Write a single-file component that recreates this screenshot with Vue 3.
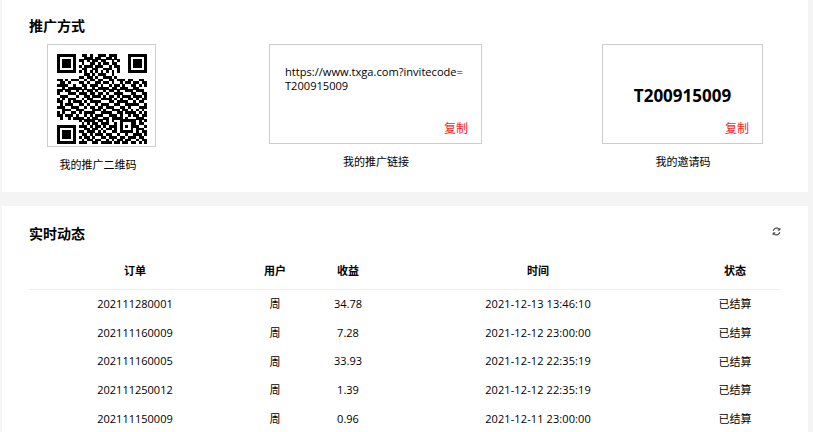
<script setup>
const raw = [
  '000000000110100111011100000000000',
  '000000000011101100110100000000000',
  '000000001101011011001010000000000',
  '000000000100110101101100000000000',
  '000000001011101110010110000000000',
  '000000000110011001110010000000000',
  '000000001010101010101010000000000',
  '000000000011010111001000000000000',
  '000000001101101001110100000000000',
  '110101110010110110011011101100110',
  '011010001101001101101001011011011',
  '111100100110111010010110100110101',
  '001011111010010111101101110011000',
  '110110010101101001011010011101110',
  '100011101110110110100111000110011',
  '011100010011011101011010111011101',
  '101011100101100011110101001101011',
  '110010111010111100011011110010110',
  '010111001101001011100110011111001',
  '111001110010110110111001101000111',
  '001110011100011101001110110101010',
  '101001101011110011110011011110101',
  '110111010010101110011101001011011',
  '010010111101011001101111010001110',
  '000000001011110110101001111110101',
  '000000000101011011100101000110110',
  '000000001110101101011101010111001',
  '000000000011011010110101000101110',
  '000000001101110101001101111101011',
  '000000000110101110110010010011101',
  '000000001011010011011101101110110',
  '000000000101101100101011011001011',
  '000000001110011011110110110110101'
]
const N = 33
function inFinder(x, y, ox, oy) {
  const dx = x - ox, dy = y - oy
  if (dx < 0 || dy < 0 || dx > 6 || dy > 6) return false
  return dx === 0 || dy === 0 || dx === 6 || dy === 6 || (dx >= 2 && dx <= 4 && dy >= 2 && dy <= 4)
}
const cells = []
for (let y = 0; y < N; y++) {
  for (let x = 0; x < N; x++) {
    const f = inFinder(x, y, 0, 0) || inFinder(x, y, 26, 0) || inFinder(x, y, 0, 26)
    if (f || raw[y][x] === '1') cells.push({ x, y })
  }
}
const rows = [
  { id: '202111280001', user: '周', income: '34.78', time: '2021-12-13 13:46:10' },
  { id: '202111160009', user: '周', income: '7.28', time: '2021-12-12 23:00:00' },
  { id: '202111160005', user: '周', income: '33.93', time: '2021-12-12 22:35:19' },
  { id: '202111250012', user: '周', income: '1.39', time: '2021-12-12 22:35:19' },
  { id: '202111150009', user: '周', income: '0.96', time: '2021-12-11 23:00:00' }
]
</script>

<template>
  <div class="page">
    <section class="card promo">
      <h2 class="title">推广方式</h2>
      <div class="ways">
        <div class="way way-qr">
          <div class="box box-qr">
            <svg class="qr" viewBox="0 0 33 33" shape-rendering="crispEdges" aria-label="二维码">
              <rect v-for="c in cells" :key="c.x + '-' + c.y" :x="c.x" :y="c.y" width="1.02" height="1.02" fill="#000" />
            </svg>
          </div>
          <p class="caption caption-qr">我的推广二维码</p>
        </div>
        <div class="way way-link">
          <div class="box box-link">
            <p class="url">https://www.txga.com?invitecode=<br />T200915009</p>
            <span class="copy">复制</span>
          </div>
          <p class="caption">我的推广链接</p>
        </div>
        <div class="way way-code">
          <div class="box box-code">
            <strong class="code">T200915009</strong>
            <span class="copy">复制</span>
          </div>
          <p class="caption">我的邀请码</p>
        </div>
      </div>
    </section>

    <section class="card live">
      <div class="live-head">
        <h2 class="title">实时动态</h2>
        <svg class="refresh" viewBox="0 0 10 10" fill="none" stroke="#111" stroke-width="1.1">
          <path d="M1.4 4.2A3.7 3.7 0 0 1 8 2.6" />
          <path d="M8.6 5.8A3.7 3.7 0 0 1 2 7.4" />
          <path d="M8.7 1v2.4H6.3" stroke-width="1" />
          <path d="M1.3 9V6.6h2.4" stroke-width="1" />
        </svg>
      </div>
      <div class="table">
        <div class="tr th">
          <span>订单</span><span>用户</span><span>收益</span><span>时间</span><span>状态</span>
        </div>
        <div v-for="r in rows" :key="r.id" class="tr td">
          <span class="num">{{ r.id }}</span>
          <span>{{ r.user }}</span>
          <span class="num">{{ r.income }}</span>
          <span class="num time">{{ r.time }}</span>
          <span>已结算</span>
        </div>
      </div>
    </section>
  </div>
</template>

<style scoped>
.page {
  width: 813px;
  height: 432px;
  overflow: hidden;
  box-sizing: border-box;
  padding: 0 5px 0 2px;
  background: #f4f4f4;
  color: #000;
  font-family: "Open Sans", "Noto Sans CJK SC", sans-serif;
  font-size: 11px;
}
.card {
  background: #fff;
  box-sizing: border-box;
}
.promo {
  height: 192px;
  padding: 16px 0 0 27px;
}
.live {
  margin-top: 14px;
  height: 226px;
  padding: 18px 27px 0;
}
.title {
  margin: 0;
  font-size: 14px;
  line-height: 18px;
  font-weight: 700;
  font-family: "Noto Sans CJK SC", sans-serif;
  color: #000;
}
.ways {
  display: flex;
  margin-top: 10px;
  padding-left: 18px;
}
.way { display: flex; flex-direction: column; align-items: center; }
.way-link { margin-left: 113px; }
.way-code { margin-left: 120px; }
.box {
  position: relative;
  box-sizing: border-box;
  border: 1px solid #ccc;
  background: #fff;
}
.box-qr {
  width: 109px;
  height: 103px;
  padding: 9px 0 0 9px;
}
.qr { display: block; width: 90px; height: 90px; }
.box-link {
  width: 213px;
  height: 100px;
  padding: 20px 0 0 15px;
}
.box-code {
  width: 161px;
  height: 100px;
  display: flex;
  justify-content: center;
  padding-top: 39px;
}
.url {
  margin: 0;
  font-size: 11.1px;
  line-height: 14px;
  white-space: nowrap;
}
.code {
  font-size: 17px;
  line-height: 23px;
  font-weight: 700;
  color: #000;
}
.copy {
  position: absolute;
  right: 14px;
  bottom: 7px;
  font-size: 12px;
  line-height: 16px;
  color: #f22;
  font-family: "Noto Sans CJK SC", sans-serif;
  transform: translateX(1px);
}
.caption {
  margin: 9px 0 0;
  padding-left: 1px;
  line-height: 16px;
  font-family: "Noto Sans CJK SC", sans-serif;
}
.caption-qr { margin: 9px 8px 0 0; }
.live-head {
  display: flex;
  justify-content: space-between;
  align-items: flex-start;
}
.refresh {
  width: 9px;
  height: 9px;
  margin-top: 3px;
}
.table { margin-top: 9px; }
.tr {
  display: grid;
  grid-template-columns: 212px 68px 78px 302px 92px;
  align-items: center;
  text-align: center;
  font-family: "Noto Sans CJK SC", sans-serif;
}
.th {
  height: 38px;
  font-weight: 700;
  border-bottom: 1px solid #eee;
}
.td {
  height: 28.7px;
  box-sizing: border-box;
  padding-bottom: 2px;
}
.num {
  font-family: "Open Sans", sans-serif;
  font-size: 11px;
}
.time { letter-spacing: 0.1px; }
</style>
